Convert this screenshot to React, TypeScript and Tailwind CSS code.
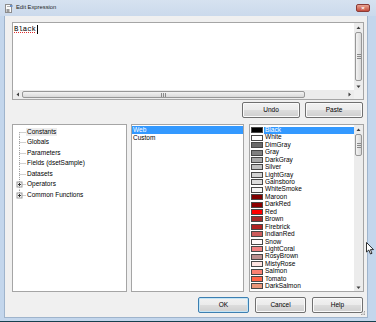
import React from "react";

const colors: [string, string][] = [
  ["Black", "bg-[#000000]"],
  ["White", "bg-[#ffffff]"],
  ["DimGray", "bg-[#696969]"],
  ["Gray", "bg-[#808080]"],
  ["DarkGray", "bg-[#a9a9a9]"],
  ["Silver", "bg-[#c0c0c0]"],
  ["LightGray", "bg-[#d3d3d3]"],
  ["Gainsboro", "bg-[#dcdcdc]"],
  ["WhiteSmoke", "bg-[#f5f5f5]"],
  ["Maroon", "bg-[#800000]"],
  ["DarkRed", "bg-[#8b0000]"],
  ["Red", "bg-[#ff0000]"],
  ["Brown", "bg-[#a52a2a]"],
  ["Firebrick", "bg-[#b22222]"],
  ["IndianRed", "bg-[#cd5c5c]"],
  ["Snow", "bg-[#fffafa]"],
  ["LightCoral", "bg-[#f08080]"],
  ["RosyBrown", "bg-[#bc8f8f]"],
  ["MistyRose", "bg-[#ffe4e1]"],
  ["Salmon", "bg-[#fa8072]"],
  ["Tomato", "bg-[#ff6347]"],
  ["DarkSalmon", "bg-[#e9967a]"],
];

const tree = [
  { label: "Constants", expand: false },
  { label: "Globals", expand: false },
  { label: "Parameters", expand: false },
  { label: "Fields (dsetSample)", expand: false },
  { label: "Datasets", expand: false },
  { label: "Operators", expand: true },
  { label: "Common Functions", expand: true },
];

function Arrow({ dir }: { dir: "up" | "down" | "left" | "right" }) {
  const pts = {
    up: "0.5,4 4.5,4 2.5,1.5",
    down: "0.5,1.5 4.5,1.5 2.5,4",
    left: "4,0.5 4,4.5 1.5,2.5",
    right: "1.5,0.5 1.5,4.5 4,2.5",
  }[dir];
  return (
    <svg width="5" height="5" viewBox="0 0 5 5">
      <polygon points={pts} fill="#3e3e3e" />
    </svg>
  );
}

function VThumb({ className }: { className: string }) {
  return (
    <div
      className={`flex flex-col items-center justify-center gap-px rounded-[2px] border border-[#979797] bg-gradient-to-r from-[#f3f3f3] to-[#d9d9d9] ${className}`}
    >
      <div className="h-px w-[4px] bg-[#8a8a8a]" />
      <div className="h-px w-[4px] bg-[#8a8a8a]" />
      <div className="h-px w-[4px] bg-[#8a8a8a]" />
    </div>
  );
}

function Btn({ label, def, className }: { label: string; def?: boolean; className: string }) {
  return (
    <div
      className={`flex h-[16px] items-center justify-center rounded-[2px] border bg-[linear-gradient(#f2f2f2,#ebebeb_50%,#dddddd_50%,#cfcfcf)] text-[6.5px] leading-none text-black ${
        def
          ? "border-[#3c7fb1] shadow-[inset_0_0_0_1px_#c4e5f6]"
          : "border-[#707070] shadow-[inset_0_0_0_1px_#fafafa]"
      } ${className}`}
    >
      {label}
    </div>
  );
}

function TreeLine({ first, last, expand }: { first: boolean; last: boolean; expand: boolean }) {
  return (
    <svg width="13" height="10.5" viewBox="0 0 13 10.5" className="shrink-0">
      <line
        x1="6.5"
        y1={first ? 5.25 : 0}
        x2="6.5"
        y2={last ? 5.25 : 10.5}
        stroke="#a0a0a0"
        strokeWidth="1"
        strokeDasharray="1 1"
      />
      <line x1="6.5" y1="5.5" x2="13" y2="5.5" stroke="#a0a0a0" strokeWidth="1" strokeDasharray="1 1" />
      {expand && (
        <g>
          <rect x="4" y="3" width="5" height="5" fill="#f7f7f7" stroke="#9a9a9a" strokeWidth="1" />
          <line x1="5" y1="5.5" x2="8" y2="5.5" stroke="#333" strokeWidth="1" />
          <line x1="6.5" y1="4" x2="6.5" y2="7" stroke="#333" strokeWidth="1" />
        </g>
      )}
    </svg>
  );
}

export default function App() {
  return (
    <div className="relative flex h-[322px] w-[376px] flex-col overflow-hidden bg-[#c3d6ec] font-['Liberation_Sans',Arial,sans-serif] text-black">
      {/* Title bar */}
      <div className="flex h-[16px] shrink-0 items-center bg-gradient-to-b from-[#d6e2f0] to-[#cbdaec] pl-[5px] pr-[6px]">
        <svg width="8" height="9" viewBox="0 0 8 9">
          <rect x="0.5" y="0.5" width="6" height="8" fill="#fbfbfb" stroke="#8d8d8d" />
          <rect x="1.5" y="5" width="3" height="3" fill="#9a9a9a" />
          <rect x="2" y="2" width="3" height="1" fill="#b0b0b0" />
          <rect x="5" y="1" width="2.5" height="2" fill="#6a8fc2" />
        </svg>
        <span className="ml-[3px] text-[5.8px] leading-none text-[#1e1e1e]">Edit Expression</span>
        <div className="ml-auto flex h-[8px] w-[14px] items-center justify-center rounded-[2px] border border-[#8a3a36] bg-gradient-to-b from-[#e8a493] to-[#c34a3c]">
          <span className="text-[6px] font-bold leading-none text-white">×</span>
        </div>
      </div>

      {/* Client area */}
      <div className="relative ml-[4px] mr-[8px] flex h-[302px] shrink-0 flex-col border-x border-b border-[#9fb4cc] bg-[#f0f0f0] pl-[7px] pr-[3px]">
        {/* Expression box */}
        <div className="mt-[6px] flex h-[78px] w-[352px] flex-col border border-[#a5a5a5] bg-white">
          <div className="flex h-[67px]">
            <div className="flex-1 pl-px pt-[1.5px] font-['Liberation_Mono','Courier_New',monospace] text-[7.3px] leading-[9px]">
              <span className="underline decoration-[#e03030] decoration-dotted underline-offset-[1px]">Black</span>
              <span className="ml-px inline-block h-[9px] w-px bg-black align-top" />
            </div>
            <div className="flex w-[9px] flex-col bg-[#ececec]">
              <div className="flex h-[8px] items-center justify-center">
                <Arrow dir="up" />
              </div>
              <VThumb className="mx-px my-px flex-1" />
              <div className="flex h-[8px] items-center justify-center">
                <Arrow dir="down" />
              </div>
            </div>
          </div>
          <div className="flex h-[9px]">
            <div className="flex flex-1 bg-[#ececec]">
              <div className="flex w-[9px] items-center justify-center">
                <Arrow dir="left" />
              </div>
              <div className="my-px flex w-[283px] items-center justify-center gap-px rounded-[2px] border border-[#979797] bg-gradient-to-b from-[#f3f3f3] to-[#d9d9d9]">
                <div className="h-[4px] w-px bg-[#8a8a8a]" />
                <div className="h-[4px] w-px bg-[#8a8a8a]" />
                <div className="h-[4px] w-px bg-[#8a8a8a]" />
              </div>
              <div className="flex-1" />
              <div className="flex w-[9px] items-center justify-center">
                <Arrow dir="right" />
              </div>
            </div>
            <div className="w-[9px] bg-[#f0f0f0]" />
          </div>
        </div>

        {/* Undo / Paste */}
        <div className="mt-[2px] flex w-[352px] justify-end gap-[5px] pr-px">
          <Btn label="Undo" className="w-[58px]" />
          <Btn label="Paste" className="w-[58px]" />
        </div>

        {/* Panels */}
        <div className="mt-[6px] flex h-[168px] text-[6.5px] leading-none">
          <div className="w-[115px] border border-[#a5a5a5] bg-white pt-[1.5px]">
            {tree.map((t, i) => (
              <div key={t.label} className="flex h-[10.5px] items-center">
                <TreeLine first={i === 0} last={i === tree.length - 1} expand={t.expand} />
                <span
                  className={`flex h-[8px] items-center px-px ${i === 0 ? "bg-[#ececec]" : ""}`}
                >
                  {t.label}
                </span>
              </div>
            ))}
          </div>

          <div className="ml-[4px] w-[113px] border border-[#a5a5a5] bg-white pt-px">
            <div className="flex h-[8px] items-center bg-[#3399ff] pl-px text-white">Web</div>
            <div className="flex h-[8px] items-center pl-px">Custom</div>
          </div>

          <div className="ml-[5px] flex w-[115px] border border-[#a5a5a5] bg-white">
            <div className="flex-1 pt-[1.5px]">
              {colors.map(([name, bg], i) => (
                <div key={name} className="flex h-[7.45px] items-center">
                  <div className={`ml-px h-[6px] w-[12px] shrink-0 border border-[#474747] ${bg}`} />
                  <span
                    className={`ml-px flex h-full flex-1 items-center pl-px ${
                      i === 0 ? "bg-[#3399ff] text-white" : ""
                    }`}
                  >
                    {name}
                  </span>
                </div>
              ))}
            </div>
            <div className="flex w-[9px] flex-col bg-[#ececec]">
              <div className="flex h-[9px] items-center justify-center">
                <Arrow dir="up" />
              </div>
              <VThumb className="mx-px h-[22px]" />
              <div className="flex-1" />
              <div className="flex h-[8px] items-center justify-center">
                <Arrow dir="down" />
              </div>
            </div>
          </div>
        </div>

        {/* OK / Cancel / Help */}
        <div className="mt-[5px] flex justify-end gap-[6px] pr-px">
          <Btn label="OK" def className="w-[51px]" />
          <Btn label="Cancel" className="w-[51px]" />
          <Btn label="Help" className="w-[51px]" />
        </div>

        {/* size grip */}
        <svg width="5" height="5" viewBox="0 0 5 5" className="absolute bottom-px right-px">
          <rect x="3" y="0" width="1" height="1" fill="#a0a0a0" />
          <rect x="1.5" y="1.5" width="1" height="1" fill="#a0a0a0" />
          <rect x="3" y="1.5" width="1" height="1" fill="#a0a0a0" />
          <rect x="0" y="3" width="1" height="1" fill="#a0a0a0" />
          <rect x="1.5" y="3" width="1" height="1" fill="#a0a0a0" />
          <rect x="3" y="3" width="1" height="1" fill="#a0a0a0" />
        </svg>
      </div>

      <div className="mt-[3px] h-px bg-[#16404e]" />

      {/* mouse pointer */}
      <svg width="9" height="13" viewBox="0 0 9 13" className="absolute left-[366px] top-[242px]">
        <path d="M0.5 0.5 L0.5 10 L2.8 8 L4.5 12 L6 11.3 L4.4 7.6 L7.5 7.6 Z" fill="#fff" stroke="#000" strokeWidth="0.8" strokeLinejoin="round" />
      </svg>
    </div>
  );
}
